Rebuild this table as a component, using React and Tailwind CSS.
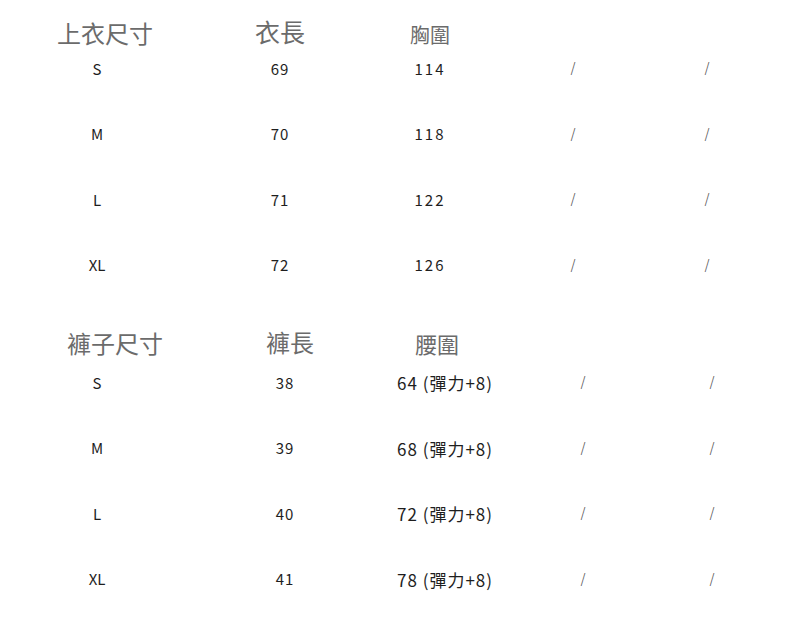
const top = {
  headers: [
    { text: '上衣尺寸', cls: 'text-[24px] pl-[16px]' },
    { text: '衣長', cls: 'text-[25px] -mt-[4px]' },
    { text: '胸圍', cls: 'text-[20px] mt-[3px]' },
  ],
  valueCls: 'tracking-[2px]',
  rows: [
    ['S', '69', '114'],
    ['M', '70', '118'],
    ['L', '71', '122'],
    ['XL', '72', '126'],
  ],
};

const bottom = {
  headers: [
    { text: '褲子尺寸', cls: 'text-[24px] pl-[36px]' },
    { text: '褲長', cls: 'text-[24px] pl-[10px] -mt-[2px]' },
    { text: '腰圍', cls: 'text-[22px] -ml-[16px]' },
  ],
  valueCls: 'text-[17px] tracking-[1px]',
  rows: [
    ['S', '38', '64 (彈力+8)'],
    ['M', '39', '68 (彈力+8)'],
    ['L', '40', '72 (彈力+8)'],
    ['XL', '41', '78 (彈力+8)'],
  ],
};

const Slash = () => (
  <span className="text-[15px] font-light text-[#555]" style={{ fontFamily: '"DejaVu Sans", sans-serif' }}>
    /
  </span>
);

const SizeTable = ({ data, cols, first, className }) => (
  <div className={className}>
    <div className={`grid ${cols} h-[30px] items-center text-[#6b6b6b] leading-none`}>
      {data.headers.map((h) => (
        <div key={h.text} className={`text-center whitespace-nowrap ${h.cls}`}>
          {h.text}
        </div>
      ))}
    </div>
    {data.rows.map((r, i) => (
      <div
        key={r[0]}
        className={`grid ${cols} h-[30px] items-center text-[15px] text-[#1e1e1e] ${i === 0 ? first : 'mt-[35.5px]'}`}
      >
        <div className="text-center">{r[0]}</div>
        <div className="text-center tracking-[1px]">{r[1]}</div>
        <div className={`text-center whitespace-nowrap ${data.valueCls}`}>{r[2]}</div>
        <div className="text-center"><Slash /></div>
        <div className="text-center"><Slash /></div>
      </div>
    ))}
  </div>
);

export default function App() {
  return (
    <div
      className="w-[790px] h-[619px] bg-white overflow-hidden pt-[18px]"
      style={{ fontFamily: '"Noto Sans CJK TC", "Noto Sans", sans-serif' }}
    >
      <SizeTable data={top} cols="grid-cols-[194px_172px_128px_158px_110px]" first="mt-[6px]" />
      <SizeTable
        data={bottom}
        cols="grid-cols-[194px_182px_138px_138px_120px]"
        first="mt-[10px]"
        className="mt-[47.5px]"
      />
    </div>
  );
}
